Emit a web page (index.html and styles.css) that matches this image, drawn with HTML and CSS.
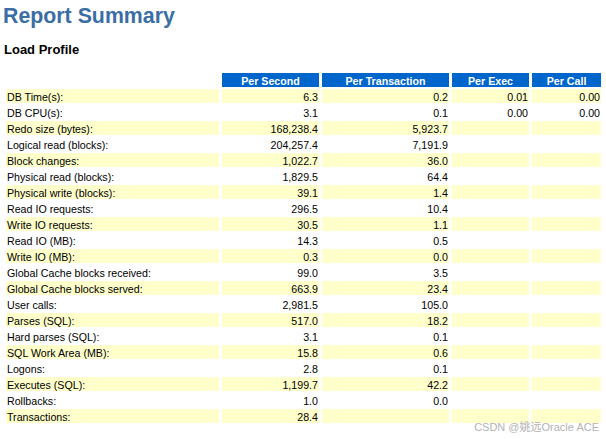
FILE: index.html
```html
<!DOCTYPE html>
<html>
<head>
<meta charset="utf-8">
<title>Report Summary</title>
<link rel="stylesheet" href="styles.css">
</head>
<body>
<div class="page">
  <h1 class="title">Report Summary</h1>
  <h2 class="subtitle">Load Profile</h2>
  <table class="profile">
    <colgroup>
      <col class="c-label"><col class="c-sec"><col class="c-tx"><col class="c-exec"><col class="c-call">
    </colgroup>
    <thead>
      <tr><th class="blank"></th><th>Per Second</th><th>Per Transaction</th><th>Per Exec</th><th>Per Call</th></tr>
    </thead>
    <tbody>
      <tr class="odd"><td class="lbl">DB Time(s):</td><td>6.3</td><td>0.2</td><td>0.01</td><td>0.00</td></tr>
      <tr><td class="lbl">DB CPU(s):</td><td>3.1</td><td>0.1</td><td>0.00</td><td>0.00</td></tr>
      <tr class="odd"><td class="lbl">Redo size (bytes):</td><td>168,238.4</td><td>5,923.7</td><td></td><td></td></tr>
      <tr><td class="lbl">Logical read (blocks):</td><td>204,257.4</td><td>7,191.9</td><td></td><td></td></tr>
      <tr class="odd"><td class="lbl">Block changes:</td><td>1,022.7</td><td>36.0</td><td></td><td></td></tr>
      <tr><td class="lbl">Physical read (blocks):</td><td>1,829.5</td><td>64.4</td><td></td><td></td></tr>
      <tr class="odd"><td class="lbl">Physical write (blocks):</td><td>39.1</td><td>1.4</td><td></td><td></td></tr>
      <tr><td class="lbl">Read IO requests:</td><td>296.5</td><td>10.4</td><td></td><td></td></tr>
      <tr class="odd"><td class="lbl">Write IO requests:</td><td>30.5</td><td>1.1</td><td></td><td></td></tr>
      <tr><td class="lbl">Read IO (MB):</td><td>14.3</td><td>0.5</td><td></td><td></td></tr>
      <tr class="odd"><td class="lbl">Write IO (MB):</td><td>0.3</td><td>0.0</td><td></td><td></td></tr>
      <tr><td class="lbl">Global Cache blocks received:</td><td>99.0</td><td>3.5</td><td></td><td></td></tr>
      <tr class="odd"><td class="lbl">Global Cache blocks served:</td><td>663.9</td><td>23.4</td><td></td><td></td></tr>
      <tr><td class="lbl">User calls:</td><td>2,981.5</td><td>105.0</td><td></td><td></td></tr>
      <tr class="odd"><td class="lbl">Parses (SQL):</td><td>517.0</td><td>18.2</td><td></td><td></td></tr>
      <tr><td class="lbl">Hard parses (SQL):</td><td>3.1</td><td>0.1</td><td></td><td></td></tr>
      <tr class="odd"><td class="lbl">SQL Work Area (MB):</td><td>15.8</td><td>0.6</td><td></td><td></td></tr>
      <tr><td class="lbl">Logons:</td><td>2.8</td><td>0.1</td><td></td><td></td></tr>
      <tr class="odd"><td class="lbl">Executes (SQL):</td><td>1,199.7</td><td>42.2</td><td></td><td></td></tr>
      <tr><td class="lbl">Rollbacks:</td><td>1.0</td><td>0.0</td><td></td><td></td></tr>
      <tr class="odd"><td class="lbl">Transactions:</td><td>28.4</td><td></td><td></td><td></td></tr>
    </tbody>
  </table>
</div>
<div class="watermark">CSDN @姚远Oracle ACE</div>
</body>
</html>
```

FILE: styles.css
```css
html, body {
  margin: 0;
  padding: 0;
  background: #ffffff;
}

body {
  font-family: "Liberation Sans", Arial, sans-serif;
  color: #000000;
  position: relative;
  width: 606px;
  height: 439px;
  overflow: hidden;
}

.page {
  padding: 4px 0 0 3px;
}

.title {
  margin: 0;
  font-size: 21.33px;
  line-height: 24px;
  font-weight: bold;
  color: #3a6ea5;
}

.subtitle {
  margin: 14px 0 0 1px;
  font-size: 13px;
  line-height: 16px;
  font-weight: bold;
  color: #000000;
}

.profile {
  margin-top: 13px;
  table-layout: fixed;
  width: 601px;
  border-collapse: separate;
  border-spacing: 3px 2px;
  font-size: 10.67px;
}

.c-label { width: 213px; }
.c-sec { width: 97px; }
.c-tx { width: 127px; }
.c-exec { width: 77px; }
.c-call { width: 69px; }

.profile th {
  height: 14px;
  box-sizing: border-box;
  padding: 1px 4px 0 4px;
  line-height: 12px;
  font-weight: bold;
  color: #ffffff;
  background: #0066cc;
  text-align: center;
  white-space: nowrap;
}

.profile th.blank {
  background: transparent;
}

.profile td {
  height: 14px;
  box-sizing: border-box;
  padding: 2px 1px 0 1px;
  line-height: 12px;
  text-align: right;
  white-space: nowrap;
  background: #ffffff;
  color: #000000;
}

.profile td.lbl {
  text-align: left;
  padding-left: 1px;
}

.profile tr.odd td {
  background: #ffffcc;
}

.watermark {
  position: absolute;
  right: 7px;
  bottom: 5px;
  font-family: "Liberation Sans", "Noto Sans CJK SC", sans-serif;
  font-size: 11px;
  line-height: 13px;
  color: #b3b3b3;
}
```
